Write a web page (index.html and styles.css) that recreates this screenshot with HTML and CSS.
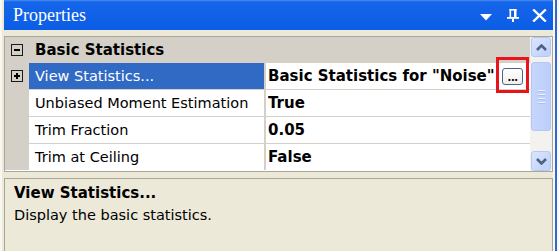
FILE: index.html
```html
<!DOCTYPE html>
<html>
<head>
<meta charset="utf-8">
<link rel="stylesheet" href="styles.css">
</head>
<body>
<div class="app">
  <div class="panel">
    <div class="titlebar">
      <span class="title">Properties</span>
      <div class="tools">
        <svg class="ic-drop" width="12" height="7" viewBox="0 0 12 7"><path d="M0 0H12L6 6.5Z" fill="#fff"/></svg>
        <svg class="ic-pin" width="12" height="13" viewBox="0 0 12 13" fill="#fff">
          <rect x="2.5" y="0" width="7" height="1.6"/>
          <rect x="2.5" y="0" width="1.6" height="8.5"/>
          <rect x="7" y="0" width="2.5" height="8.5"/>
          <rect x="0" y="8" width="12" height="1.8"/>
          <rect x="5" y="9.5" width="2" height="3.5"/>
        </svg>
        <svg class="ic-close" width="15" height="13" viewBox="0 0 15 13"><path d="M1.2 0.5L13.8 12.5M13.8 0.5L1.2 12.5" stroke="#fff" stroke-width="2.4"/></svg>
      </div>
    </div>
    <div class="grid">
      <div class="rows">
        <div class="row cat">
          <div class="gut"><span class="box minus"></span></div>
          <div class="catname">Basic Statistics</div>
        </div>
        <div class="row sel">
          <div class="gut"><span class="box plus"></span></div>
          <div class="name">View Statistics...</div>
          <div class="val"><span class="vtext">Basic Statistics for "Noise"</span><span class="ell">...</span></div>
        </div>
        <div class="row">
          <div class="gut"></div>
          <div class="name">Unbiased Moment Estimation</div>
          <div class="val"><span class="vtext">True</span></div>
        </div>
        <div class="row">
          <div class="gut"></div>
          <div class="name">Trim Fraction</div>
          <div class="val"><span class="vtext">0.05</span></div>
        </div>
        <div class="row">
          <div class="gut"></div>
          <div class="name">Trim at Ceiling</div>
          <div class="val"><span class="vtext">False</span></div>
        </div>
      </div>
      <div class="scroll">
        <div class="sbtn">
          <svg width="11" height="7" viewBox="0 0 11 7"><path d="M1 6L5.5 1.5L10 6" fill="none" stroke="#4d6185" stroke-width="2.6"/></svg>
        </div>
        <div class="track">
          <div class="thumb">
            <span class="grip"></span><span class="grip"></span><span class="grip"></span><span class="grip"></span>
          </div>
        </div>
        <div class="sbtn">
          <svg width="11" height="7" viewBox="0 0 11 7"><path d="M1 1L5.5 5.5L10 1" fill="none" stroke="#4d6185" stroke-width="2.6"/></svg>
        </div>
      </div>
    </div>
    <div class="desc">
      <div class="dtitle">View Statistics...</div>
      <div class="dtext">Display the basic statistics.</div>
    </div>
  </div>
  <div class="edge"></div>
  <div class="mark"></div>
</div>
</body>
</html>
```
FILE: styles.css
```css
html, body {
  margin: 0;
  padding: 0;
}
body {
  width: 559px;
  height: 251px;
  overflow: hidden;
  background: #ece9d8;
  font-family: "DejaVu Sans", sans-serif;
  color: #000;
}
.app {
  position: relative;
  display: flex;
  height: 251px;
}
.panel {
  width: 549px;
  border-left: 2px solid #f8f7f2;
  padding-left: 2px;
  display: flex;
  flex-direction: column;
  background: #ece9d8;
}
.edge {
  width: 2px;
  border-left: 2px solid #f8f7f2;
  border-right: 2px solid #f8f7f2;
  background: #2f68d2;
}
.titlebar {
  height: 30px;
  flex: none;
  display: flex;
  align-items: center;
  justify-content: space-between;
  background: linear-gradient(#4a8ef3 0, #1565ea 2px, #0b5de5 100%);
}
.title {
  font-family: "Liberation Serif", serif;
  font-size: 18px;
  color: #fff;
  padding-left: 9px;
  padding-top: 1px;
}
.tools {
  display: flex;
  align-items: center;
  margin-right: 6px;
}
.ic-drop { margin-top: 5px; }
.ic-pin { margin-left: 15px; margin-top: 0; }
.ic-close { margin-left: 13px; }

.grid {
  margin-top: 6px;
  height: 134px;
  flex: none;
  border: 1px solid #a9a698;
  display: flex;
  background: #fff;
}
.rows {
  width: 526px;
  display: flex;
  flex-direction: column;
}
.row {
  height: 26px;
  border-bottom: 1px solid #d4d0c8;
  display: flex;
  align-items: stretch;
  font-size: 14.5px;
}
.row:last-child {
  border-bottom: none;
}
.row.cat {
  border-bottom: none;
  background: #d4d0c8;
}
.gut {
  width: 24px;
  flex: none;
  background: #d4d0c8;
  display: flex;
  align-items: center;
  justify-content: center;
}
.box {
  width: 10px;
  height: 10px;
  border: 1px solid #1a1a1a;
  position: relative;
  background: transparent;
}
.box::before {
  content: "";
  position: absolute;
  left: 2px;
  top: 4px;
  width: 6px;
  height: 2px;
  background: #000;
}
.box.plus::after {
  content: "";
  position: absolute;
  left: 4px;
  top: 2px;
  width: 2px;
  height: 6px;
  background: #000;
}
.catname {
  font-weight: bold;
  font-size: 15px;
  padding-left: 6px;
  display: flex;
  align-items: center;
}
.name {
  width: 229px;
  flex: none;
  padding-left: 6px;
  display: flex;
  align-items: center;
  border-right: 2px solid #d4d0c8;
  white-space: nowrap;
}
.row.sel .name {
  background: #316ac5;
  color: #fff;
}
.val {
  flex: 1;
  display: flex;
  align-items: center;
  padding-left: 2px;
  font-weight: bold;
  font-size: 15px;
  white-space: nowrap;
  overflow: hidden;
}
.vtext {
  flex: 1;
  overflow: hidden;
}
.ell {
  width: 19px;
  height: 15px;
  margin-right: 7px;
  margin-left: 4px;
  flex: none;
  border: 1px solid #47668d;
  border-radius: 3px;
  background: linear-gradient(#ffffff, #efeee8);
  font-size: 10px;
  font-weight: bold;
  line-height: 18px;
  text-align: center;
  color: #000;
  letter-spacing: -0.5px;
}
.scroll {
  width: 22px;
  display: flex;
  flex-direction: column;
  background: #f3f2ee;
}
.sbtn {
  height: 18px;
  margin: 0 1px;
  border: 1px solid #b6c9f4;
  border-radius: 3px;
  background: linear-gradient(135deg, #dbe6fd, #bcd0fb);
  display: flex;
  align-items: center;
  justify-content: center;
  flex: none;
}
.track {
  flex: 1;
  padding: 5px 1px 0;
}
.thumb {
  height: 67px;
  border: 1px solid #b3c7f4;
  border-radius: 3px;
  background: linear-gradient(90deg, #c6d6fc, #bccefa);
  display: flex;
  flex-direction: column;
  align-items: center;
  justify-content: center;
  gap: 2px;
}
.grip {
  width: 7px;
  height: 1px;
  background: #eef3fe;
  border-bottom: 1px solid #a8bdf0;
}
.desc {
  margin-top: 6px;
  height: 67px;
  flex: none;
  border: 1px solid #a9a698;
  padding: 5px 9px 0;
  background: #ece9d8;
}
.dtitle {
  font-weight: bold;
  font-size: 15px;
  line-height: 19px;
}
.dtext {
  font-size: 14.5px;
  line-height: 19px;
  margin-top: 3px;
}
.mark {
  position: absolute;
  left: 496px;
  top: 57px;
  width: 27px;
  height: 30px;
  border: 3px solid #e8141c;
}
```
